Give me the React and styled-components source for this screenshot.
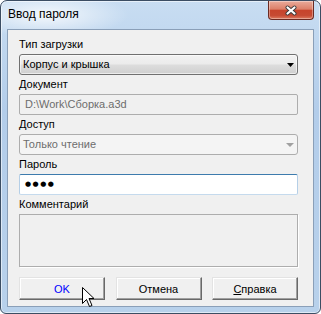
import React from "react";
import styled, { createGlobalStyle, css } from "styled-components";

const GlobalStyle = createGlobalStyle`
  html, body {
    margin: 0;
    padding: 0;
    background: #fff;
  }
  body {
    font-family: "Liberation Sans", Arial, sans-serif;
    font-size: 11px;
    color: #000;
  }
  * {
    box-sizing: border-box;
  }
`;

const Window = styled.div`
  position: relative;
  width: 321px;
  height: 314px;
  border: 1px solid #3b4d63;
  border-radius: 7px 7px 6px 6px;
  padding: 0 6px 6px;
  display: flex;
  flex-direction: column;
  background:
    radial-gradient(ellipse 110px 30px at 45px 14px, rgba(255, 255, 255, 0.8), rgba(255, 255, 255, 0) 75%),
    linear-gradient(to bottom, #c8ddf2 0%, #b3cdea 35%, #b8d1eb 100%);
  box-shadow: inset 0 0 0 1px rgba(255, 255, 255, 0.55);
  overflow: hidden;
`;

const TitleBar = styled.div`
  height: 28px;
  display: flex;
  align-items: flex-start;
  justify-content: space-between;
  padding-left: 1px;
`;

const Title = styled.span`
  font-size: 12px;
  line-height: 16px;
  padding-top: 5px;
`;

const CloseButton = styled.div`
  width: 46px;
  height: 19px;
  border: 1px solid #6b2a22;
  border-top: none;
  border-radius: 0 0 4px 4px;
  background: linear-gradient(
    to bottom,
    #e9ab9b 0%,
    #dc8069 45%,
    #c7442c 52%,
    #c64a33 80%,
    #dd7a5f 100%
  );
  box-shadow: inset 0 0 0 1px rgba(255, 255, 255, 0.35);
  display: flex;
  align-items: center;
  justify-content: center;
`;

const Client = styled.div`
  flex: 1;
  border: 1px solid #8a9fb8;
  background: #f0f0f0;
  padding: 8px 15px 0 11px;
  display: flex;
  flex-direction: column;
`;

const Field = styled.div`
  display: flex;
  flex-direction: column;
  margin-bottom: 3px;
`;

const Label = styled.div`
  line-height: 13px;
  margin-bottom: 3px;
`;

const Combo = styled.div`
  height: 21px;
  border: 1px solid #707070;
  border-radius: 3px;
  display: flex;
  align-items: center;
  justify-content: space-between;
  padding: 0 3px 0 3px;
  line-height: 19px;
  background: linear-gradient(to bottom, #f2f2f2 0%, #ebebeb 48%, #dddddd 52%, #cfcfcf 100%);
  box-shadow: inset 0 0 0 1px rgba(255, 255, 255, 0.6);
  ${(p) =>
    p.$disabled &&
    css`
      border-color: #adadad;
      background: #f4f4f4;
      color: #6d6d6d;
      box-shadow: none;
    `}
`;

const TextBox = styled.div`
  height: 21px;
  border: 1px solid #adadad;
  border-radius: 2px;
  padding: 0 5px;
  line-height: 19px;
  display: flex;
  align-items: center;
  background: ${(p) => (p.$disabled ? "#f0f0f0" : "#fff")};
  color: ${(p) => (p.$disabled ? "#6d6d6d" : "#000")};
  ${(p) =>
    p.$focused &&
    css`
      border-color: #b5cfe7;
      border-top-color: #3d7bad;
      border-bottom-color: #c5daed;
    `}
`;

const Dots = styled.span`
  font-family: "DejaVu Sans", sans-serif;
  font-size: 7px;
  letter-spacing: 1.5px;
`;

const Memo = styled.div`
  height: 53px;
  border: 1px solid #adadad;
  background: #f0f0f0;
  box-shadow: 1px 1px 0 #fff;
`;

const ButtonRow = styled.div`
  display: flex;
  justify-content: space-between;
  margin-top: 7px;
`;

const DlgButton = styled.div`
  width: 86px;
  height: 23px;
  background: #f0f0f0;
  border-top: 1px solid #e3e3e3;
  border-left: 1px solid #e3e3e3;
  border-right: 1px solid #696969;
  border-bottom: 1px solid #696969;
  box-shadow: inset -1px -1px 0 #a0a0a0, inset 1px 1px 0 #fff;
  display: flex;
  align-items: center;
  justify-content: center;
  color: ${(p) => (p.$accent ? "#0000ff" : "#000")};
  u {
    text-decoration: underline;
  }
`;

const Cursor = styled.svg`
  position: absolute;
  left: 81px;
  top: 286px;
`;

function ArrowDown({ color, w = 7 }) {
  return (
    <svg width={w} height="4" viewBox={`0 0 ${w} 4`}>
      <polygon points={`0,0 ${w},0 ${w / 2},4`} fill={color} />
    </svg>
  );
}

export default function App() {
  return (
    <>
      <GlobalStyle />
      <Window>
        <TitleBar>
          <Title>Ввод пароля</Title>
          <CloseButton>
            <svg width="14" height="11" viewBox="0 0 14 11">
              <g strokeLinecap="round">
                <line x1="3.5" y1="2.5" x2="10.5" y2="8.5" stroke="#3a3a3a" strokeWidth="4" />
                <line x1="10.5" y1="2.5" x2="3.5" y2="8.5" stroke="#3a3a3a" strokeWidth="4" />
                <line x1="3.5" y1="2.5" x2="10.5" y2="8.5" stroke="#fff" strokeWidth="2.2" />
                <line x1="10.5" y1="2.5" x2="3.5" y2="8.5" stroke="#fff" strokeWidth="2.2" />
              </g>
            </svg>
          </CloseButton>
        </TitleBar>
        <Client>
          <Field>
            <Label>Тип загрузки</Label>
            <Combo>
              <span>Корпус и крышка</span>
              <ArrowDown color="#000" />
            </Combo>
          </Field>
          <Field>
            <Label>Документ</Label>
            <TextBox $disabled>D:\Work\Сборка.a3d</TextBox>
          </Field>
          <Field>
            <Label>Доступ</Label>
            <Combo $disabled>
              <span>Только чтение</span>
              <ArrowDown color="#a0a0a0" w={8} />
            </Combo>
          </Field>
          <Field>
            <Label>Пароль</Label>
            <TextBox $focused>
              <Dots>●●●●</Dots>
            </TextBox>
          </Field>
          <Field>
            <Label>Комментарий</Label>
            <Memo />
          </Field>
          <ButtonRow>
            <DlgButton $accent>OK</DlgButton>
            <DlgButton>Отмена</DlgButton>
            <DlgButton>
              <span>
                <u>С</u>правка
              </span>
            </DlgButton>
          </ButtonRow>
        </Client>
        <Cursor width="13" height="21" viewBox="0 0 13 21">
          <path
            d="M0.5 0.5 L0.5 16.5 L4.5 12.5 L7.5 19.5 L10 18.5 L7 11.5 L12 11.5 Z"
            fill="#fff"
            stroke="#000"
            strokeWidth="1"
            strokeLinejoin="miter"
          />
        </Cursor>
      </Window>
    </>
  );
}
